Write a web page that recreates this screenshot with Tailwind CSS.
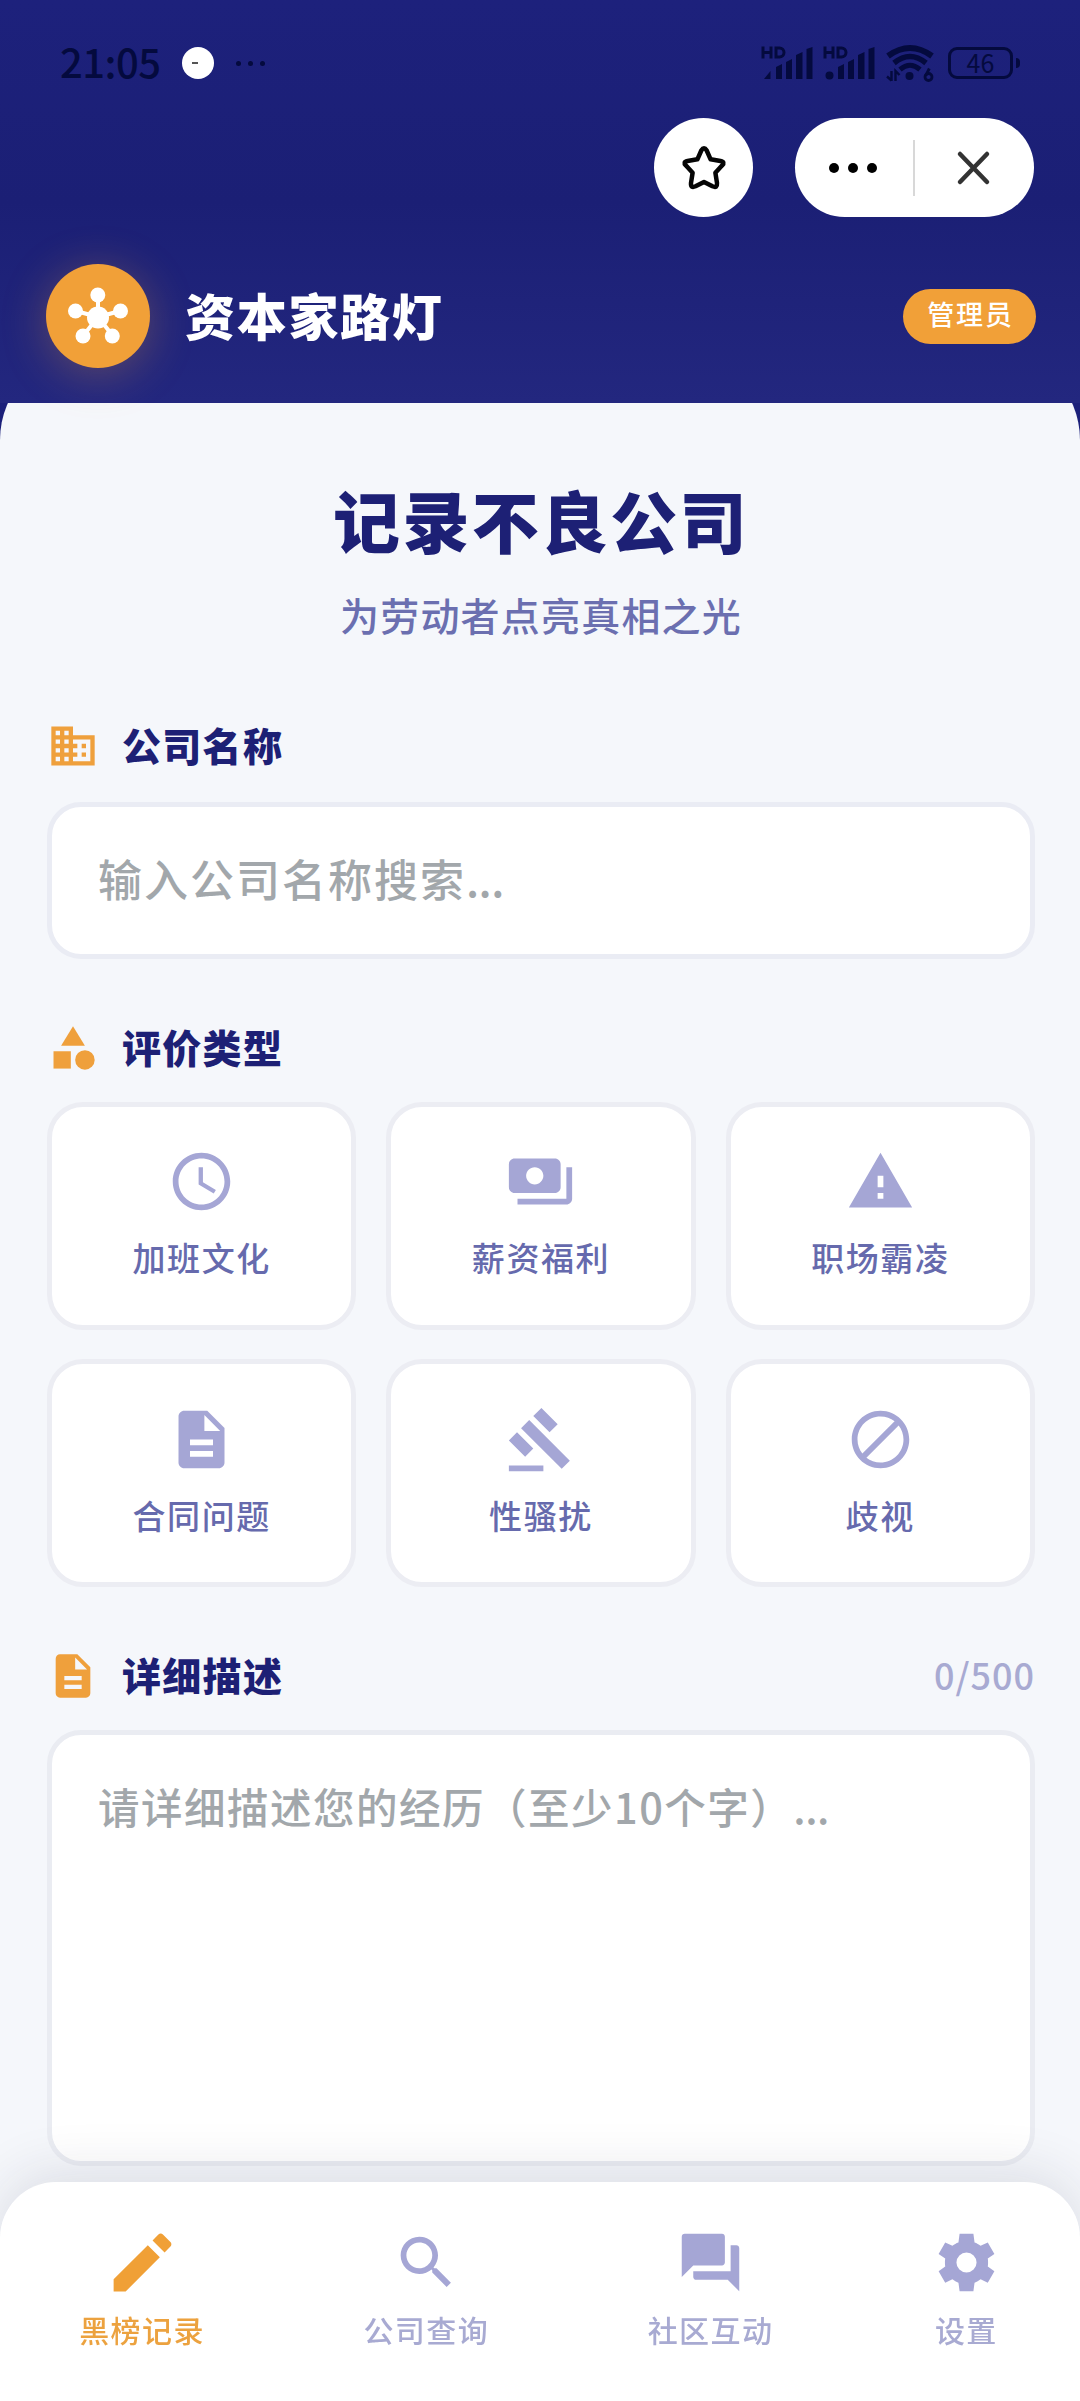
<!DOCTYPE html>
<html lang="zh-CN">
<head>
<meta charset="utf-8">
<title>资本家路灯</title>
<script src="https://cdn.jsdelivr.net/npm/@tailwindcss/browser@4"></script>
</head>
<body class="relative h-[2401px] w-[1080px] overflow-hidden bg-[#1c207a] font-['Noto_Sans_CJK_SC',sans-serif]">

<header class="relative z-10 h-[403px] bg-linear-to-b from-[#1d217c] from-0% via-[#1b1f75] via-50% to-[#23277f] to-100%">
  <!-- status bar -->
  <div class="flex h-[118px] items-center justify-between pt-2 pr-[60px] pl-[60px] text-[#040a3e]">
    <div class="flex items-center">
      <span class="-mt-[4px] w-[122px] text-[40px] leading-[42px] font-medium tracking-[-0.500px]">21:05</span>
      <span class="flex size-8 items-center justify-center rounded-full bg-white"><span class="mr-1.5 h-0.5 w-1.5 bg-[#555]"></span></span>
      <span class="ml-[22px] flex gap-[7px]">
        <span class="size-[5px] rounded-full bg-current"></span><span class="size-[5px] rounded-full bg-current"></span><span class="size-[5px] rounded-full bg-current"></span>
      </span>
    </div>
    <div class="flex items-center">
      <svg class="mr-[10px] h-9 w-[52px]" viewBox="0 0 52 36" fill="none" stroke="currentColor">
        <path d="M2 1.500v12M10 1.500v12M2 7.500h8M15 3v9h3.500a4.500 4.500 0 0 0 0-9z" stroke-width="3"/>
        <path d="M3 34l6.500-8v8zM15 34v-12l6-3v15zM25 34v-17l6-3v20zM35 34v-24l6.500-3v27zM45.500 34v-30l6-2v32z" fill="currentColor" stroke="none"/>
      </svg>
      <svg class="mr-[11px] h-9 w-[52px]" viewBox="0 0 52 36" fill="none" stroke="currentColor">
        <path d="M2 1.500v12M10 1.500v12M2 7.500h8M15 3v9h3.500a4.500 4.500 0 0 0 0-9z" stroke-width="3"/>
        <circle cx="6.500" cy="30.500" r="4" fill="currentColor" stroke="none"/>
        <path d="M15 34v-12l6-3v15zM25 34v-17l6-3v20zM35 34v-24l6.500-3v27zM45.500 34v-30l6-2v32z" fill="currentColor" stroke="none"/>
      </svg>
      <svg class="mr-[14px] h-[38px] w-12" viewBox="0 0 48 38" fill="none" stroke="currentColor">
        <path d="M2 12Q24-4 46 12" stroke-width="6"/>
        <path d="M8 19Q24 6 40 19" stroke-width="5.500"/>
        <path d="M14 25.500Q24 17 34 25.500" stroke-width="5"/>
        <circle cx="23.500" cy="32" r="4" fill="currentColor" stroke="none"/>
        <path d="M5.500 27v10M1 32.500l4.500 4M9.500 37v-10l4 4" stroke-width="2.400"/>
        <circle cx="42.500" cy="33" r="3.500" stroke-width="2.800"/><path d="M39.800 31.500l3.500-7" stroke-width="2.800"/>
      </svg>
      <span class="flex h-8 w-[65px] items-center justify-center rounded-[9px] border-3 border-current pb-[2px] text-[25px] leading-6">46</span>
      <span class="ml-[3px] h-2.5 w-1 rounded-r-full bg-current"></span>
    </div>
  </div>

  <!-- mini-program capsule -->
  <div class="flex h-[99px] justify-end pr-[46px]">
    <div class="flex w-[99px] items-center justify-center rounded-full bg-white">
      <svg class="size-[50px]" viewBox="0 0 50 50" fill="none" stroke="#050505" stroke-width="4.500" stroke-linejoin="round">
        <path d="M22.300 7.500Q25 3 27.700 7.500L31.600 16.300L41.500 18Q46.500 19 43 22.600L36.400 29.800L38 40Q38.500 45.500 33.500 43.300L25 39L16.500 43.300Q11.500 45.500 12 40L13.600 29.800L7 22.600Q3.500 19 8.500 18L18.400 16.300Z"/>
      </svg>
    </div>
    <div class="ml-[42px] flex w-[239px] items-center rounded-full bg-white">
      <div class="flex w-[118px] items-center justify-center gap-[9px] pr-[2px]">
        <span class="size-2.5 rounded-full bg-black"></span><span class="size-2.5 rounded-full bg-black"></span><span class="size-2.5 rounded-full bg-black"></span>
      </div>
      <div class="h-14 w-0.5 bg-[#d8d8d8]"></div>
      <svg class="ml-[41px] size-9" viewBox="0 0 36 36" fill="none" stroke="#333" stroke-width="4.500" stroke-linecap="round"><path d="M4 4L31 32M31 4L4 32"/></svg>
    </div>
  </div>

  <!-- app bar -->
  <div class="mt-[47px] flex h-[104px] items-center justify-between pr-[44px] pl-[46px]">
    <div class="flex items-center">
      <div class="flex size-[104px] items-center justify-center rounded-full bg-[#f1a038] shadow-[0_6px_46px_rgba(241,160,56,0.3)]">
        <svg class="size-16" viewBox="0 0 64 64" fill="#fff" stroke="#fff" stroke-width="4">
          <path d="M32 33V11M32 33L10 27M32 33L54 27M32 33L17 52M32 33L47 52" fill="none"/>
          <g stroke="none"><circle cx="32" cy="33.500" r="11"/><circle cx="31.800" cy="11" r="7.500"/><circle cx="9.500" cy="27" r="7.500"/><circle cx="54.500" cy="27" r="7.500"/><circle cx="17" cy="52" r="7.500"/><circle cx="46.300" cy="52" r="7.500"/></g>
        </svg>
      </div>
      <h1 class="ml-[35px] -mt-[5px] text-[50px] leading-[60px] font-black tracking-[1.700px] text-white">资本家路灯</h1>
    </div>
    <span class="flex h-[55px] w-[133px] items-center justify-center rounded-full bg-[#f1a038] pb-[5px] pl-0.5 text-[27px] leading-[40px] font-medium tracking-[1.800px] text-white">管理员</span>
  </div>
</header>

<main class="h-[1998px] overflow-hidden">
  <div class="-mt-[53px] h-[2060px] rounded-t-[90px] bg-[#f5f7fb] pt-[129px] pr-[45px] pl-[47px]">
    <h2 class="h-20 text-center text-[67px] leading-[80px] font-black tracking-[2.300px] text-[#1d2075]">记录不良公司</h2>
    <p class="mt-[30px] h-[50px] text-center text-[39px] leading-[50px] font-medium tracking-[1.200px] text-[#6b6fb0]">为劳动者点亮真相之光</p>

    <div class="mt-[81px] flex h-[52px] items-center">
      <svg class="size-[52px] fill-[#efa03c]" viewBox="0 0 24 24"><path d="M12 7V3H2v18h20V7H12zM6 19H4v-2h2v2zm0-4H4v-2h2v2zm0-4H4V9h2v2zm0-4H4V5h2v2zm4 12H8v-2h2v2zm0-4H8v-2h2v2zm0-4H8V9h2v2zm0-4H8V5h2v2zm10 12h-8v-2h2v-2h-2v-2h2v-2h-2V9h8v10zm-2-8h-2v2h2v-2zm0 4h-2v2h2v-2z"/></svg>
      <h3 class="ml-[23px] -mt-[4px] text-[39px] leading-[52px] font-black tracking-[1.300px] text-[#1d2075]">公司名称</h3>
    </div>
    <div class="mt-[30px] flex h-[157px] items-center rounded-[34px] border-[5px] border-[#eaecf4] bg-white pb-[6px] pl-[46px] text-[44px] leading-[60px] font-medium tracking-[2px] text-[#a2a7ab]">输入公司名称搜索<span class="tracking-[-0.500px]">...</span></div>

    <div class="mt-[63px] flex h-[52px] items-center">
      <svg class="size-[52px] fill-[#efa03c]" viewBox="0 0 24 24"><path d="M12 2l-5.500 9h11z"/><circle cx="17.500" cy="17.500" r="4.500"/><path d="M3 13.500h8v8H3z"/></svg>
      <h3 class="ml-[23px] -mt-[4px] text-[39px] leading-[52px] font-black tracking-[1.300px] text-[#1d2075]">评价类型</h3>
    </div>
    <div class="mt-[28px] grid grid-cols-3 grid-rows-[228px_228px] gap-x-[30px] gap-y-[29px] text-[33px] leading-[44px] font-medium tracking-[1.600px] text-[#666aad]">
      <div class="flex flex-col items-center rounded-[36px] border-[5px] border-[#ecedf3] bg-white pt-[40px]">
        <svg class="size-[69px] fill-[#a5a6d5]" viewBox="0 0 24 24"><path d="M11.990 2C6.470 2 2 6.480 2 12s4.470 10 9.990 10C17.520 22 22 17.520 22 12S17.520 2 11.990 2zM12 20c-4.420 0-8-3.580-8-8s3.580-8 8-8 8 3.580 8 8-3.580 8-8 8zm.5-13H11v6l5.250 3.150.75-1.230-4.500-2.670z"/></svg>
        <span class="mt-[19px]">加班文化</span>
      </div>
      <div class="flex flex-col items-center rounded-[36px] border-[5px] border-[#ecedf3] bg-white pt-[40px]">
        <svg class="size-[69px] fill-[#a5a6d5]" viewBox="0 0 24 24"><path d="M19 14V6c0-1.100-.9-2-2-2H3c-1.100 0-2 .9-2 2v8c0 1.100.9 2 2 2h14c1.100 0 2-.9 2-2zm-9-1c-1.660 0-3-1.340-3-3s1.340-3 3-3 3 1.340 3 3-1.340 3-3 3zm13-6v11c0 1.100-.9 2-2 2H4v-2h17V7h2z"/></svg>
        <span class="mt-[19px]">薪资福利</span>
      </div>
      <div class="flex flex-col items-center rounded-[36px] border-[5px] border-[#ecedf3] bg-white pt-[40px]">
        <svg class="size-[69px] fill-[#a5a6d5]" viewBox="0 0 24 24"><path d="M1 21h22L12 2 1 21zm12-3h-2v-2h2v2zm0-4h-2v-4h2v4z"/></svg>
        <span class="mt-[19px]">职场霸凌</span>
      </div>
      <div class="flex flex-col items-center rounded-[36px] border-[5px] border-[#ecedf3] bg-white pt-[41px]">
        <svg class="size-[69px] fill-[#a5a6d5]" viewBox="0 0 24 24"><path d="M14 2H6c-1.100 0-1.990.9-1.990 2L4 20c0 1.100.89 2 1.990 2H18c1.100 0 2-.9 2-2V8l-6-6zm2 16H8v-2h8v2zm0-4H8v-2h8v2zm-3-5V3.500L18.500 9H13z"/></svg>
        <span class="mt-[19px]">合同问题</span>
      </div>
      <div class="flex flex-col items-center rounded-[36px] border-[5px] border-[#ecedf3] bg-white pt-[41px]">
        <svg class="size-[69px] fill-[#a5a6d5]" viewBox="0 0 24 24"><path d="M1 21h12v2H1zM5.240 8.070l2.830-2.830 14.140 14.140-2.830 2.830zM12.320 1l5.660 5.660-2.830 2.830-5.660-5.660zM3.830 9.480l5.660 5.660-2.830 2.830L1 12.310z"/></svg>
        <span class="mt-[19px]">性骚扰</span>
      </div>
      <div class="flex flex-col items-center rounded-[36px] border-[5px] border-[#ecedf3] bg-white pt-[41px]">
        <svg class="size-[69px] fill-[#a5a6d5]" viewBox="0 0 24 24"><path d="M12 2C6.480 2 2 6.480 2 12s4.480 10 10 10 10-4.480 10-10S17.520 2 12 2zM4 12c0-4.420 3.580-8 8-8 1.850 0 3.550.63 4.900 1.690L5.690 16.900C4.630 15.550 4 13.850 4 12zm8 8c-1.850 0-3.550-.63-4.900-1.690L18.310 7.100C19.370 8.450 20 10.150 20 12c0 4.420-3.580 8-8 8z"/></svg>
        <span class="mt-[19px]">歧视</span>
      </div>
    </div>

    <div class="mt-[63px] flex h-[52px] items-center">
      <svg class="size-[52px] fill-[#efa03c]" viewBox="0 0 24 24"><path d="M14 2H6c-1.100 0-1.990.9-1.990 2L4 20c0 1.100.89 2 1.990 2H18c1.100 0 2-.9 2-2V8l-6-6zm2 16H8v-2h8v2zm0-4H8v-2h8v2zm-3-5V3.500L18.500 9H13z"/></svg>
      <h3 class="ml-[23px] -mt-[4px] text-[39px] leading-[52px] font-black tracking-[1.300px] text-[#1d2075]">详细描述</h3>
      <span class="ml-auto -mt-[4px] text-[36px] leading-[52px] font-medium tracking-[1px] text-[#a8aad2]">0/500</span>
    </div>
    <div class="mt-[28px] h-[436px] rounded-[34px] border-[5px] border-[#eaecf2] bg-white pt-[41px] pl-[46px] text-[41.500px] leading-[60px] font-medium tracking-[1.500px] text-[#a2a7ab]">请详细描述您的经历（至少10个字）<span class="tracking-[-0.500px]">...</span></div>
  </div>
</main>

<nav class="fixed bottom-0 left-0 z-20 flex h-[219px] w-[1080px] justify-around rounded-t-[56px] bg-white pt-[46px] text-[30px] leading-[40px] font-medium tracking-[1.500px] text-[#a8aad2] shadow-[0_-8px_56px_rgba(30,32,60,0.12)]">
  <div class="flex flex-col items-center text-[#eca23f]">
    <svg class="-m-1 size-[77px]" viewBox="0 0 24 24" fill="#f0a036"><path d="M3 17.250V21h3.750L17.400 10.350l-3.750-3.750zM20.710 7.040c.39-.39.39-1.020 0-1.410l-2.340-2.340c-.39-.39-1.020-.39-1.410 0l-1.830 1.830 3.750 3.750z"/></svg>
    <span class="mt-[12px]">黑榜记录</span>
  </div>
  <div class="flex flex-col items-center">
    <svg class="size-[69px] fill-[#a5a6d5]" viewBox="0 0 24 24"><path d="M15.500 14h-.79l-.28-.27C15.410 12.590 16 11.110 16 9.500 16 5.910 13.090 3 9.500 3S3 5.910 3 9.500 5.910 16 9.500 16c1.610 0 3.090-.59 4.230-1.570l.27.28v.79l5 4.990L20.490 19l-4.990-5zm-6 0C7.010 14 5 11.990 5 9.500S7.010 5 9.500 5 14 7.010 14 9.500 11.990 14 9.500 14z"/></svg>
    <span class="mt-[12px]">公司查询</span>
  </div>
  <div class="flex flex-col items-center">
    <svg class="size-[69px] fill-[#a5a6d5]" viewBox="0 0 24 24"><path d="M21 6h-2v9H6v2c0 .55.45 1 1 1h11l4 4V7c0-.55-.45-1-1-1zm-4 6V3c0-.55-.45-1-1-1H3c-.55 0-1 .45-1 1v14l4-4h10c.55 0 1-.45 1-1z"/></svg>
    <span class="mt-[12px]">社区互动</span>
  </div>
  <div class="flex flex-col items-center">
    <svg class="size-[69px] fill-[#a5a6d5]" viewBox="0 0 24 24"><path d="M19.500 12c0-.5 0-1-.1-1.400l2.300-1.600-2.300-4-2.500 1.200c-.7-.55-1.300-.95-2.100-1.200L14.400 2H9.600l-.4 3c-.8.25-1.400.65-2.100 1.200L4.600 5l-2.300 4 2.300 1.600c-.1.400-.1.900-.1 1.400s0 1 .1 1.400L2.300 15l2.300 4 2.500-1.200c.7.55 1.300.95 2.100 1.200l.4 3h4.800l.4-3c.8-.25 1.400-.65 2.100-1.200l2.500 1.200 2.300-4-2.300-1.600c.1-.4.1-.9.1-1.400zM12 15.500a3.500 3.500 0 1 1 0-7 3.500 3.500 0 0 1 0 7z"/></svg>
    <span class="mt-[12px]">设置</span>
  </div>
</nav>
</body>
</html>
